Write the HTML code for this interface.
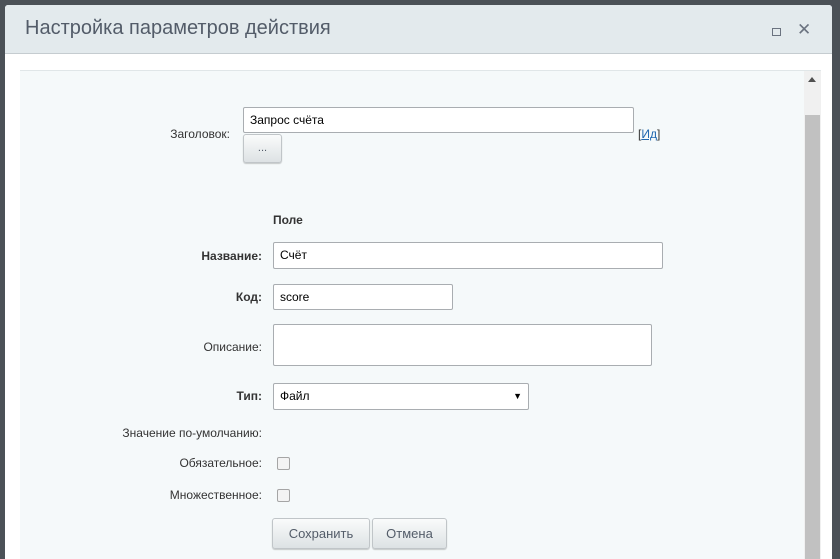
<!DOCTYPE html>
<html><head><meta charset="utf-8"><style>
html,body{margin:0;width:840px;height:559px;overflow:hidden;}
body{background:#4b5157;position:relative;font-family:"Liberation Sans",sans-serif;}
.dlg{position:absolute;left:5px;top:5px;width:827px;height:554px;background:#fff;border-radius:3px 3px 0 0;}
.hd{height:48px;background:#e3eaed;border-bottom:1px solid #c5ccd0;border-radius:3px 3px 0 0;position:relative;}
.hd .t{position:absolute;left:20px;top:12px;font-size:20px;color:#535c69;}
.max{position:absolute;left:767px;top:23px;width:7px;height:6px;border:1px solid #6b7380;}
.x{position:absolute;left:792px;top:15px;font-size:17px;color:#6b7380;}
.panel{position:absolute;left:20px;top:70px;width:801px;height:489px;background:#f5f9fa;border-top:1px solid #e0e6e8;}
.sb{position:absolute;left:784px;top:0;width:17px;height:489px;background:#f0f0f0;}
.th{position:absolute;left:1px;top:44px;width:15px;height:445px;background:#c1c1c1;}
.ar{position:absolute;left:4px;top:6px;width:0;height:0;border-left:4px solid transparent;border-right:4px solid transparent;border-bottom:5px solid #505050;}
.l{position:absolute;font-size:12px;color:#333;text-align:right;}
.b{font-weight:bold;}
.in{position:absolute;background:#fff;border:1px solid #a9adb1;border-radius:2px;font-size:13px;color:#000;padding-left:6px;box-sizing:border-box;}
.btn{position:absolute;border:1px solid #c0c5c8;border-radius:3px;background:linear-gradient(#fafbfb,#dde2e4);box-shadow:0 1px 1px rgba(0,0,0,.2);font-size:13px;color:#535c69;text-align:center;box-sizing:border-box;}
.cb{position:absolute;width:11px;height:11px;border:1px solid #a5a5a5;border-radius:2px;background:#f3f3f3;}
</style></head><body>
<div class="dlg">
<div class="hd"><div class="t">Настройка параметров действия</div><div class="max"></div><div class="x">✕</div></div>
</div>
<div class="panel"><div class="sb"><div class="ar"></div><div class="th"></div></div></div>
<div class="l" style="left:150px;top:127px;width:80px;">Заголовок:</div>
<div class="in" style="left:243px;top:107px;width:391px;height:26px;line-height:24px;font-size:12px;">Запрос счёта</div>
<div class="l" style="left:638px;top:127px;text-align:left;">[<span style="color:#2067b0;text-decoration:underline;">Ид</span>]</div>
<div class="btn" style="left:243px;top:134px;width:39px;height:29px;line-height:26px;font-size:11px;">...</div>
<div class="l b" style="left:273px;top:213px;text-align:left;">Поле</div>
<div class="l b" style="left:150px;top:249px;width:112px;">Название:</div>
<div class="in" style="left:273px;top:242px;width:390px;height:27px;line-height:25px;font-size:12px;">Счёт</div>
<div class="l b" style="left:150px;top:290px;width:112px;">Код:</div>
<div class="in" style="left:273px;top:284px;width:180px;height:26px;line-height:24px;font-size:12px;">score</div>
<div class="l" style="left:150px;top:340px;width:112px;">Описание:</div>
<div class="in" style="left:273px;top:324px;width:379px;height:42px;"></div>
<div class="l b" style="left:150px;top:389px;width:112px;">Тип:</div>
<div class="in" style="left:273px;top:383px;width:256px;height:27px;line-height:25px;font-size:12px;">Файл<span style="position:absolute;right:6px;font-size:9px;">▼</span></div>
<div class="l" style="left:100px;top:426px;width:162px;">Значение по-умолчанию:</div>
<div class="l" style="left:100px;top:456px;width:162px;">Обязательное:</div>
<div class="cb" style="left:277px;top:457px;"></div>
<div class="l" style="left:100px;top:488px;width:162px;">Множественное:</div>
<div class="cb" style="left:277px;top:489px;"></div>
<div class="btn" style="left:272px;top:518px;width:98px;height:31px;line-height:29px;">Сохранить</div>
<div class="btn" style="left:372px;top:518px;width:75px;height:31px;line-height:29px;">Отмена</div>
</body></html>
